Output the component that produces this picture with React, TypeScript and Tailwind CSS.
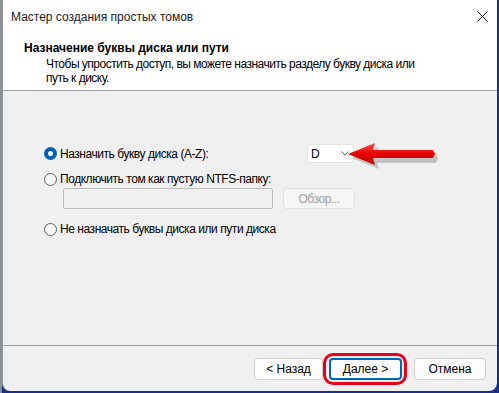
import React from "react";

function Radio({ checked }: { checked?: boolean }) {
  return checked ? (
    <span className="w-[13px] h-[13px] rounded-full bg-[#005fb8] flex items-center justify-center shrink-0">
      <span className="w-[5px] h-[5px] rounded-full bg-white" />
    </span>
  ) : (
    <span className="w-[13px] h-[13px] rounded-full border border-[#5f5f5f] bg-[#f7f7f7] shrink-0" />
  );
}

function RedArrow() {
  return (
    <svg className="absolute left-[346px] top-[140px]" width="96" height="32" viewBox="0 0 96 32">
      <defs>
        <linearGradient id="shaft" x1="0" y1="0" x2="0" y2="1">
          <stop offset="0" stopColor="#ff4a4a" />
          <stop offset="0.5" stopColor="#e60000" />
          <stop offset="1" stopColor="#b80000" />
        </linearGradient>
      </defs>
      <polygon points="4,16 31,5 29,11 88,11 90,17 88,21 29,21 31,27" fill="#00000030" transform="translate(2,2)" />
      <polygon points="2,14 29,3 27,10 87,10 89,14 87,18 27,18 29,25" fill="url(#shaft)" />
    </svg>
  );
}

export default function App() {
  return (
    <div
      className="w-[499px] h-[393px] bg-[#1c2f86] relative overflow-hidden"
      style={{ fontFamily: '"Liberation Sans", Arial, sans-serif' }}
    >
      <div className="absolute left-0 top-0 w-[2px] h-[393px] bg-[#8a9098]" />
      <div className="ml-[2px] w-[495px] h-[391px] rounded-b-[8px] border-l border-[#9a9a9a] bg-[#f0f0f0] flex flex-col overflow-hidden text-[12px] text-black">
        {/* title bar */}
        <div className="h-[33px] bg-white flex items-center justify-between pl-[8px] pr-[9px] shrink-0">
          <span className="text-[12px] text-[#1a1a1a]">Мастер создания простых томов</span>
          <svg width="11" height="11" viewBox="0 0 11 11">
            <path d="M0.5 0.5 L10.5 10.5 M10.5 0.5 L0.5 10.5" stroke="#1a1a1a" strokeWidth="1" />
          </svg>
        </div>
        {/* header */}
        <div className="h-[57px] bg-white pl-[21px] pt-[7px] shrink-0">
          <div className="font-bold text-[12px] leading-[16px]">Назначение буквы диска или пути</div>
          <div className="pl-[22px] leading-[14px] text-[12px] mt-[1px] whitespace-nowrap tracking-[-0.5px]">
            Чтобы упростить доступ, вы можете назначить разделу букву диска или
            <br />
            путь к диску.
          </div>
        </div>
        <div className="h-px bg-[#a0a0a0] shrink-0" />
        {/* content */}
        <div className="flex-1 pt-[53px] pl-[41px] flex flex-col tracking-[-0.45px]">
          <div className="flex items-center h-[19px]">
            <Radio checked />
            <span className="ml-[3px] w-[247px]">Назначить букву диска (A-Z):</span>
            <div className="w-[47px] h-[19px] bg-white border border-[#e4e4e4] rounded-[3px] flex items-center justify-between pl-[3px] pr-[4px] tracking-normal">
              <span>D</span>
              <svg width="8" height="5" viewBox="0 0 8 5">
                <path d="M0.5 0.5 L4 4 L7.5 0.5" stroke="#606060" fill="none" strokeWidth="1" />
              </svg>
            </div>
          </div>
          <div className="flex items-center h-[14px] mt-[9px]">
            <Radio />
            <span className="ml-[3px]">Подключить том как пустую NTFS-папку:</span>
          </div>
          <div className="flex items-center mt-[2px] ml-[19px] gap-[10px]">
            <div className="w-[210px] h-[21px] border border-[#bcbcbc] bg-[#f0f0f0] rounded-[2px]" />
            <div className="w-[72px] h-[21px] border border-[#e2e2e2] bg-[#f6f6f6] rounded-[4px] flex items-center justify-center text-[#a0a0a0]">
              Обзор...
            </div>
          </div>
          <div className="flex items-center h-[14px] mt-[13px]">
            <Radio />
            <span className="ml-[3px]">Не назначать буквы диска или пути диска</span>
          </div>
        </div>
        <div className="h-px bg-[#a0a0a0] shrink-0" />
        {/* footer */}
        <div className="h-[45px] flex items-start pt-[12px] pl-[251px] shrink-0">
          <div className="w-[69px] h-[22px] bg-[#fdfdfd] border border-[#d0d0d0] rounded-[4px] flex items-center justify-center">
            &lt; Назад
          </div>
          <div className="ml-[6px] w-[73px] h-[22px] bg-[#fdfdfd] border-2 border-[#0067c0] rounded-[4px] flex items-center justify-center">
            Далее &gt;
          </div>
          <div className="ml-[12px] w-[72px] h-[22px] bg-[#fdfdfd] border border-[#d0d0d0] rounded-[4px] flex items-center justify-center">
            Отмена
          </div>
        </div>
      </div>
      <RedArrow />
      <div className="absolute left-[323px] top-[353px] w-[84px] h-[32px] border-[3px] border-[#e8001c] rounded-[10px]" />
    </div>
  );
}
